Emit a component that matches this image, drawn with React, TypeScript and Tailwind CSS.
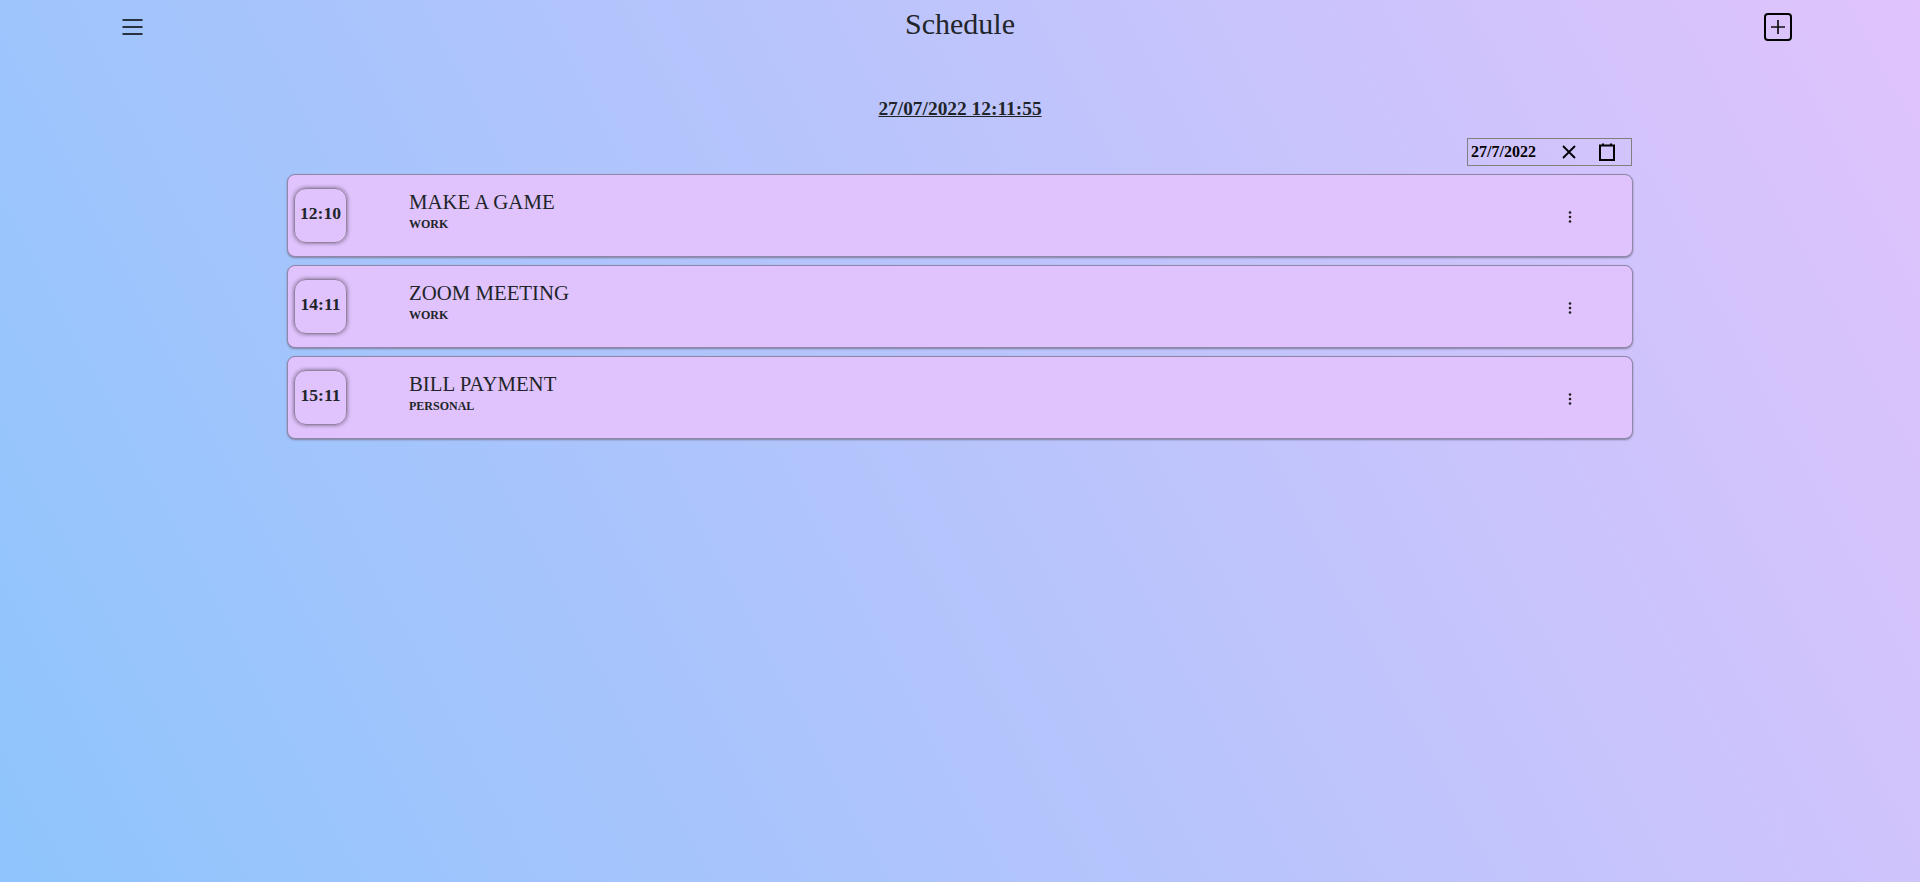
const tasks = [
  { time: '12:10', title: 'MAKE A GAME', tag: 'WORK' },
  { time: '14:11', title: 'ZOOM MEETING', tag: 'WORK' },
  { time: '15:11', title: 'BILL PAYMENT', tag: 'PERSONAL' },
];

function Dots() {
  return (
    <svg width="24" height="24" viewBox="0 0 24 24" fill="#1f1f1f">
      <circle cx="12" cy="7.5" r="1.3" />
      <circle cx="12" cy="12" r="1.3" />
      <circle cx="12" cy="16.5" r="1.3" />
    </svg>
  );
}

export default function App() {
  return (
    <div className="min-h-screen bg-[linear-gradient(62deg,#8ec5fc_0%,#e0c3fc_100%)] font-['Liberation_Serif',serif] text-[#212529]">
      <header className="h-[54px] pl-[121px] pr-[128px] grid grid-cols-[1fr_auto_1fr] items-center">
        <svg width="24" height="24" viewBox="0 0 24 24" fill="none" stroke="#000" strokeWidth="1.7">
          <path d="M1.5 5h20M1.5 12h20M1.5 19h20" />
        </svg>
        <h1 className="text-[30px] leading-none -mt-[6px] ml-[7px]">Schedule</h1>
        <div className="justify-self-end w-[28px] h-[28px] border-2 border-black rounded-[4px] flex items-center justify-center">
          <svg width="20" height="20" viewBox="0 0 20 20" fill="none" stroke="#111" strokeWidth="1.7">
            <path d="M10 3v14M3 10h14" />
          </svg>
        </div>
      </header>

      <div className="mt-[45px] text-center text-[19.4px] leading-[20px] font-bold underline">27/07/2022 12:11:55</div>

      <main className="mx-auto w-[1346px] mt-[19px]">
        <div className="flex justify-end pr-[1px]">
          <div className="w-[165px] h-[28px] border border-[#808080] flex items-center pl-[3px] text-[16px] leading-none font-bold text-black">
            <span className="w-[89px] -mt-[1px]">27/7/2022</span>
            <svg width="18" height="18" viewBox="0 0 18 18" fill="none" stroke="#000" strokeWidth="1.8">
              <path d="M3 3l12 12M15 3L3 15" />
            </svg>
            <svg className="ml-[20px]" width="18" height="18" viewBox="0 0 18 18" fill="none" stroke="#000" strokeWidth="2">
              <path d="M2 2.5h14v14.5H2zM5 0.5v3M13 0.5v3" />
            </svg>
          </div>
        </div>

        <div className="mt-[8px] flex flex-col gap-[8px]">
          {tasks.map((task) => (
            <div
              key={task.time}
              className="h-[83px] bg-[#e0c3fc] border border-[#8f86a8] rounded-[8px] shadow-[0_1px_2px_#7f7f9f] flex items-center pl-[6px]"
            >
              <div className="w-[53px] h-[55px] mb-[1px] rounded-[12px] border border-[#94829f] shadow-[0_0_4px_#6f5f7f] flex items-center justify-center text-[17.6px] font-bold pb-[4px]">
                {task.time}
              </div>
              <div className="ml-[62px] mb-[11px]">
                <div className="text-[20.8px] leading-[24px]">{task.title}</div>
                <div className="text-[12px] leading-[14px] font-bold mt-[3px]">{task.tag}</div>
              </div>
              <div className="ml-auto mr-[50px] mt-[3px]">
                <Dots />
              </div>
            </div>
          ))}
        </div>
      </main>
    </div>
  );
}
